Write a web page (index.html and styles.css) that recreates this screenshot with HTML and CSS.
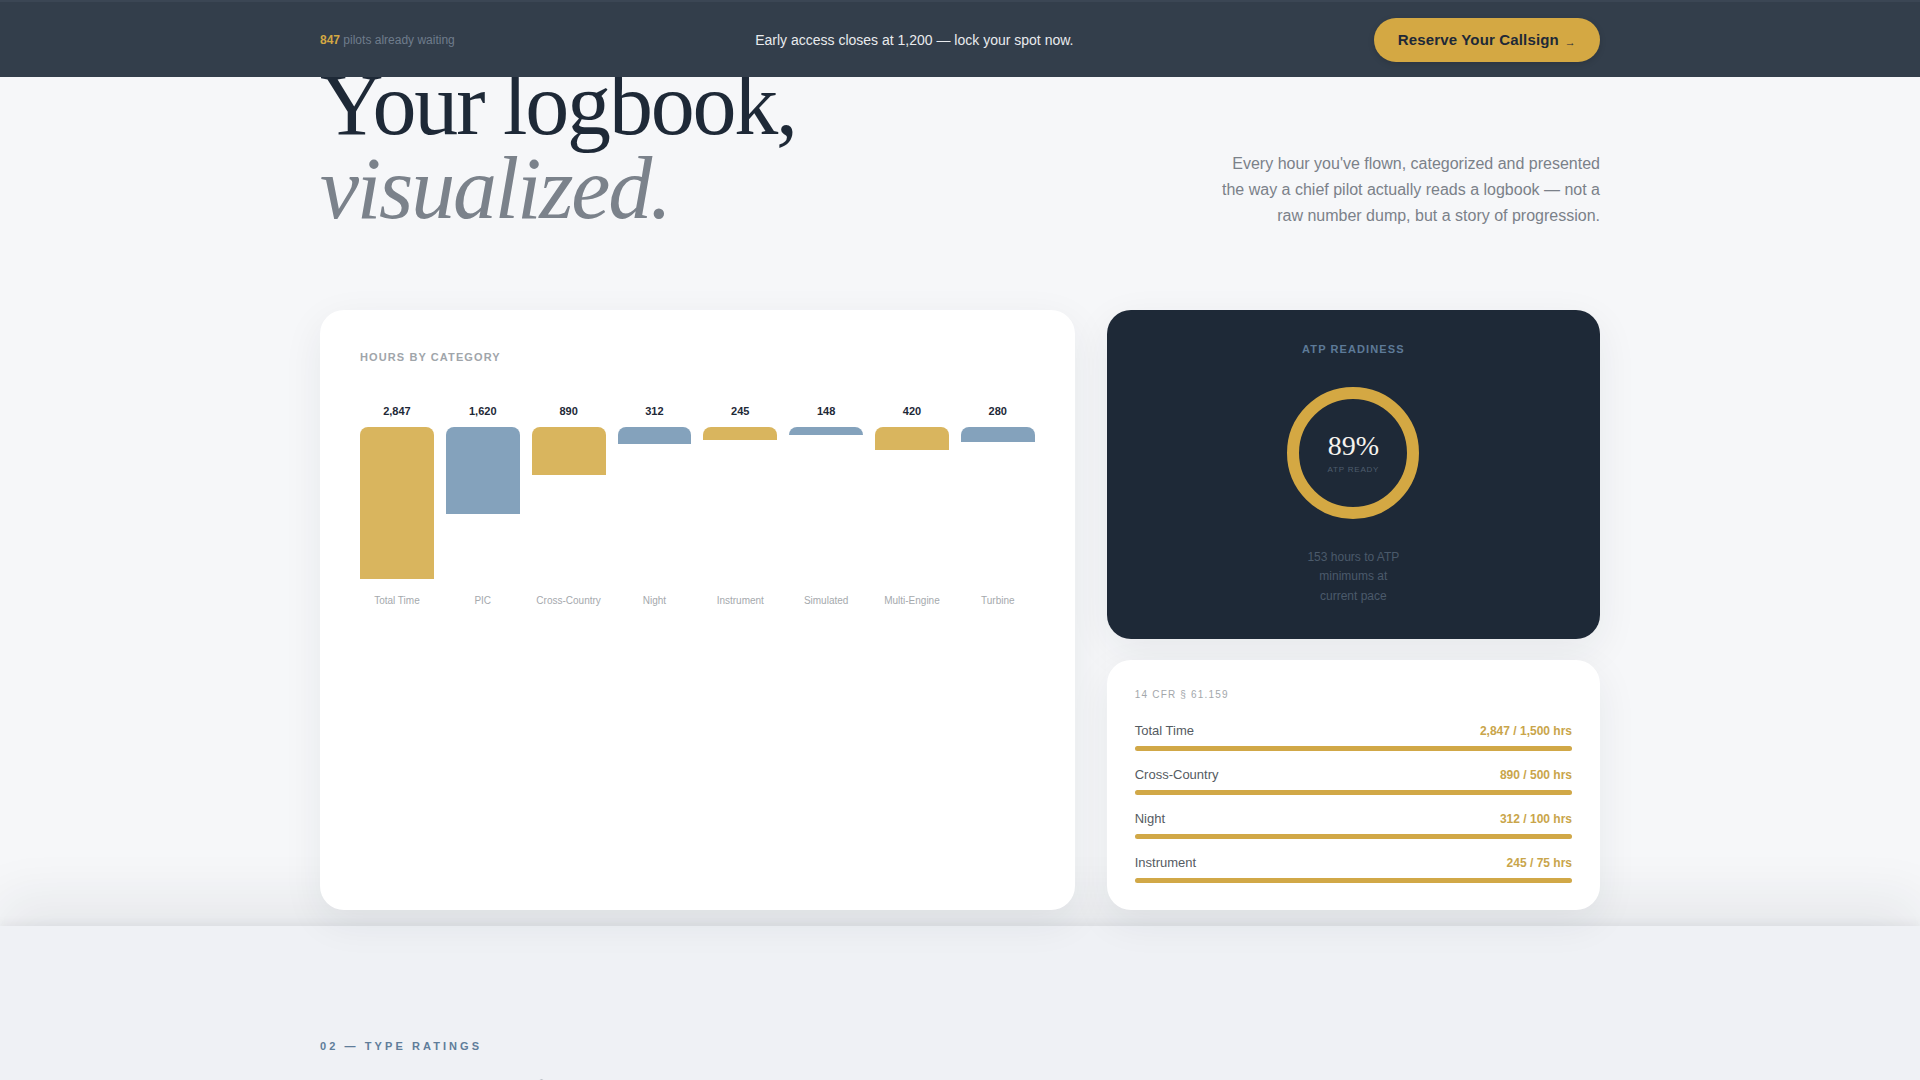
FILE: index.html
```html
<!DOCTYPE html>
<html lang="en">
  <head>
    <meta charset="UTF-8" />
    <meta name="viewport" content="width=device-width, initial-scale=1" />
    <title>Logbook — Early Access</title>
    <link rel="stylesheet" href="styles.css">
  </head>
  <body>
    <header class="topbar">
      <div class="wrap topbar-inner">
        <p class="waiting"><strong>847</strong> pilots already waiting</p>
        <p class="notice">Early access closes at 1,200 — lock your spot now.</p>
        <a class="cta" href="#">Reserve Your Callsign <span class="arrow">→</span></a>
      </div>
    </header>

    <main>
      <section class="hero">
        <div class="wrap">
          <div class="hero-head">
            <h1>Your logbook,<span class="soft">visualized.</span></h1>
            <p class="lede">
              Every hour you've flown, categorized and presented the way a chief
              pilot actually reads a logbook — not a raw number dump, but a story
              of progression.
            </p>
          </div>

          <div class="hero-grid">
            <div class="card chart-card">
              <h3 class="eyebrow">Hours by Category</h3>
              <div class="chart">
                <div class="col">
                  <span class="val">2,847</span>
                  <div class="bar-area"><div class="bar gold" style="height: 152px"></div></div>
                  <span class="lbl">Total Time</span>
                </div>
                <div class="col">
                  <span class="val">1,620</span>
                  <div class="bar-area"><div class="bar blue" style="height: 86.5px"></div></div>
                  <span class="lbl">PIC</span>
                </div>
                <div class="col">
                  <span class="val">890</span>
                  <div class="bar-area"><div class="bar gold" style="height: 47.5px"></div></div>
                  <span class="lbl">Cross-Country</span>
                </div>
                <div class="col">
                  <span class="val">312</span>
                  <div class="bar-area"><div class="bar blue" style="height: 16.7px"></div></div>
                  <span class="lbl">Night</span>
                </div>
                <div class="col">
                  <span class="val">245</span>
                  <div class="bar-area"><div class="bar gold" style="height: 13.1px"></div></div>
                  <span class="lbl">Instrument</span>
                </div>
                <div class="col">
                  <span class="val">148</span>
                  <div class="bar-area"><div class="bar blue" style="height: 7.9px"></div></div>
                  <span class="lbl">Simulated</span>
                </div>
                <div class="col">
                  <span class="val">420</span>
                  <div class="bar-area"><div class="bar gold" style="height: 22.4px"></div></div>
                  <span class="lbl">Multi-Engine</span>
                </div>
                <div class="col">
                  <span class="val">280</span>
                  <div class="bar-area"><div class="bar blue" style="height: 15px"></div></div>
                  <span class="lbl">Turbine</span>
                </div>
              </div>
            </div>

            <div class="side">
              <div class="card dark-card">
                <h3 class="eyebrow eyebrow-blue">ATP Readiness</h3>
                <div class="donut">
                  <svg width="132" height="132" viewBox="0 0 132 132">
                    <circle cx="66" cy="66" r="60" fill="none" stroke="#d4a843" stroke-width="12" />
                  </svg>
                  <div class="donut-text">
                    <span class="pct">89%</span>
                    <span class="pct-lbl">ATP READY</span>
                  </div>
                </div>
                <p class="pace">153 hours to ATP minimums at current pace</p>
              </div>

              <div class="card regs-card">
                <p class="regs-title">14 CFR § 61.159</p>
                <div class="req">
                  <div class="req-row"><span>Total Time</span><b>2,847 / 1,500 hrs</b></div>
                  <div class="track"><div class="fill" style="width: 100%"></div></div>
                </div>
                <div class="req">
                  <div class="req-row"><span>Cross-Country</span><b>890 / 500 hrs</b></div>
                  <div class="track"><div class="fill" style="width: 100%"></div></div>
                </div>
                <div class="req">
                  <div class="req-row"><span>Night</span><b>312 / 100 hrs</b></div>
                  <div class="track"><div class="fill" style="width: 100%"></div></div>
                </div>
                <div class="req">
                  <div class="req-row"><span>Instrument</span><b>245 / 75 hrs</b></div>
                  <div class="track"><div class="fill" style="width: 100%"></div></div>
                </div>
              </div>
            </div>
          </div>
        </div>
      </section>

      <section class="ratings">
        <div class="wrap">
          <p class="section-tag">02 — Type Ratings</p>
          <h2>Every airframe, one timeline.</h2>
        </div>
      </section>
    </main>
  </body>
</html>
```

FILE: styles.css
```css
* {
  box-sizing: border-box;
}
body {
  margin: 0;
  background: #f6f7f9;
  color: #1e2937;
  font-family: "Liberation Sans", Arial, sans-serif;
}
.wrap {
  width: 1280px;
  margin: 0 auto;
}

/* top bar */
.topbar {
  position: fixed;
  top: 0;
  left: 0;
  right: 0;
  height: 77px;
  background: #333e4b;
  border-top: 2px solid #3b4654;
  z-index: 10;
}
.topbar-inner {
  height: 100%;
  display: flex;
  align-items: center;
  justify-content: space-between;
}
.waiting {
  margin: 0;
  font-size: 12px;
  color: #6f7c8b;
}
.waiting strong {
  color: #d4a843;
}
.notice {
  margin: 0;
  font-size: 14px;
  color: #e9ebee;
}
.cta {
  display: inline-flex;
  align-items: center;
  gap: 6px;
  height: 44px;
  padding: 0 24px;
  border-radius: 22px;
  background: #d4a843;
  color: #1e2937;
  font-size: 15px;
  font-weight: bold;
  letter-spacing: 0.01em;
  text-decoration: none;
  box-shadow: 0 2px 6px rgba(0, 0, 0, 0.15);
}
.arrow {
  font-size: 11px;
  margin-top: 4px;
}

/* hero */
.hero {
  padding: 63px 0 16px;
}
.hero-head {
  display: flex;
  justify-content: space-between;
  align-items: flex-end;
}
h1 {
  margin: 0;
  font-family: "Liberation Serif", "Times New Roman", serif;
  font-weight: 400;
  font-size: 88px;
  line-height: 0.95;
  letter-spacing: -0.025em;
  color: #1e2937;
}
.soft {
  display: block;
  font-style: italic;
  color: #7b828b;
}
.lede {
  margin: 0 0 2px;
  max-width: 386px;
  text-align: right;
  font-size: 16px;
  line-height: 1.6;
  color: #7b8189;
}
.hero-grid {
  margin-top: 80px;
  display: grid;
  grid-template-columns: 1.53fr 1fr;
  gap: 32px;
}
.card {
  background: #fff;
  border-radius: 24px;
  box-shadow: 0 12px 40px rgba(30, 41, 59, 0.07);
}
.eyebrow {
  margin: 0;
  font-size: 11px;
  line-height: 14px;
  font-weight: bold;
  letter-spacing: 0.1em;
  text-transform: uppercase;
  color: #a0a5aa;
}
.eyebrow-blue {
  color: #5d7a98;
  text-align: center;
}

/* chart */
.chart-card {
  padding: 40px;
}
.chart {
  margin-top: 40px;
  display: grid;
  grid-template-columns: repeat(8, 1fr);
  gap: 12px;
}
.col {
  display: flex;
  flex-direction: column;
  align-items: center;
}
.val {
  font-size: 11px;
  line-height: 14px;
  font-weight: bold;
  color: #1e2937;
  margin-bottom: 9px;
}
.bar-area {
  width: 100%;
  height: 160px;
}
.bar {
  width: 100%;
  border-radius: 8px 8px 0 0;
}
.gold {
  background: #d9b55e;
}
.blue {
  background: #84a2bc;
}
.lbl {
  margin-top: 8px;
  font-size: 10px;
  line-height: 12px;
  color: #a5a9ad;
}

/* right column */
.side {
  display: flex;
  flex-direction: column;
  gap: 21px;
}
.dark-card {
  background: #1e2937;
  padding: 32px 32px 33px;
  display: flex;
  flex-direction: column;
  align-items: center;
}
.donut {
  margin-top: 31px;
  display: grid;
  place-items: center;
}
.donut svg,
.donut-text {
  grid-area: 1 / 1;
}
.donut svg {
  display: block;
}
.donut-text {
  display: flex;
  flex-direction: column;
  align-items: center;
}
.pct {
  font-family: "Liberation Serif", "Times New Roman", serif;
  font-size: 28px;
  line-height: 30px;
  color: #f5f3ee;
}
.pct-lbl {
  margin-top: 4px;
  font-size: 8px;
  line-height: 10px;
  letter-spacing: 0.1em;
  color: #4e5d6e;
}
.pace {
  margin: 29px 0 0;
  max-width: 100px;
  text-align: center;
  font-size: 12px;
  line-height: 19.2px;
  color: #4b5a6b;
}

.regs-card {
  padding: 28px 28px 27px;
}
.regs-title {
  margin: 0 0 20px;
  font-size: 10px;
  line-height: 14px;
  letter-spacing: 0.12em;
  color: #a3a7ab;
}
.req + .req {
  margin-top: 15px;
}
.req-row {
  display: flex;
  justify-content: space-between;
  align-items: center;
  height: 18px;
  font-size: 13px;
  color: #555b62;
}
.req-row b {
  font-size: 12px;
  color: #c9a54a;
}
.track {
  margin-top: 6px;
  height: 5px;
  border-radius: 3px;
  background: #eef0f2;
}
.fill {
  height: 100%;
  border-radius: 3px;
  background: #d1a847;
}

/* next section */
.ratings {
  background: #eff1f5;
  padding-top: 113px;
  box-shadow: 0 -4px 8px rgba(30, 41, 59, 0.05),
    0 -28px 50px rgba(30, 41, 59, 0.07);
}
.section-tag {
  margin: 0;
  font-size: 11px;
  line-height: 14px;
  font-weight: bold;
  letter-spacing: 0.28em;
  text-transform: uppercase;
  color: #5f7d9a;
}
h2 {
  margin: 18px 0 0;
  font-family: "Liberation Serif", "Times New Roman", serif;
  font-weight: 400;
  font-size: 56px;
  line-height: 1.1;
  color: #1e2937;
}
```
